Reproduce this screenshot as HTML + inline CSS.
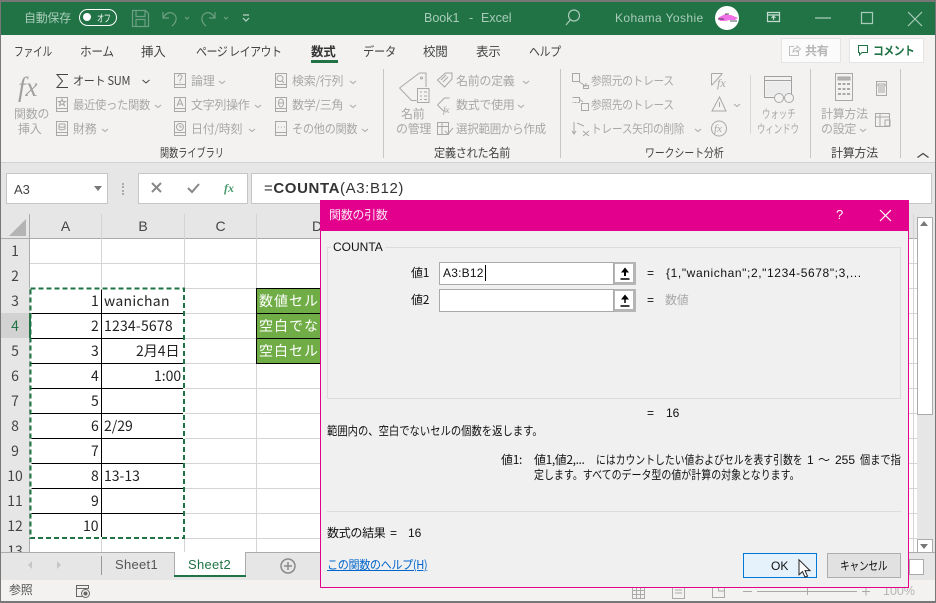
<!DOCTYPE html>
<html lang="ja"><head><meta charset="utf-8"><style>
html,body{margin:0;padding:0}
body{width:936px;height:603px;overflow:hidden;position:relative;background:#f3f2f1;font-family:"Liberation Sans","Noto Sans CJK JP",sans-serif;font-size:12px;color:#333}
.t{position:absolute;white-space:nowrap;line-height:14px;height:14px;transform-origin:0 0}
.b{position:absolute}
.g{color:#a8a8a8}
.j{font-family:"Noto Sans CJK JP",sans-serif;letter-spacing:-.3px}
.w{color:#a9ccba}
.tab{color:#444;top:44px;font-size:12.5px}
.c{font-size:14px;color:#222;line-height:16px;height:16px;font-family:"Noto Sans CJK JP","Liberation Sans",sans-serif}
.rh{position:absolute;left:1px;width:28px;text-align:center;font-size:14px;line-height:25px;height:25px;color:#444;font-family:"Noto Sans CJK JP",sans-serif}
.ch{position:absolute;top:214px;height:24px;line-height:24px;text-align:center;font-size:14px;color:#444}
.h{position:absolute;background:#d4d4d4;height:1px;left:30px;width:887px}
.v{position:absolute;background:#d4d4d4;width:1px;top:214px;height:338px}
.blk{position:absolute;background:#000}
.d{color:#111;font-size:12px}
svg{position:absolute;overflow:visible}
</style></head><body>
<!-- chrome -->
<div class="b" style="left:0;top:0;width:936px;height:2px;background:#777"></div>
<div class="b" style="left:0;top:2px;width:936px;height:33px;background:#217346"></div>
<div class="b" style="left:0;top:0;width:1px;height:603px;background:#777;z-index:9"></div>
<div class="b" style="right:0;top:0;width:1px;height:603px;background:#777;z-index:9"></div>
<div class="b" style="left:0;top:601px;width:936px;height:2px;background:#777;z-index:9"></div>

<div class="t j w" style="left:24px;top:11px">自動保存</div>
<div class="b" style="left:79px;top:9px;width:36px;height:15px;border:1px solid #fff;border-radius:9px"></div>
<div class="b" style="left:83px;top:13px;width:8px;height:8px;background:#fff;border-radius:50%"></div>
<div class="t j" style="left:97px;top:11px;color:#fff;font-size:10px;transform:scaleX(.7)">オフ</div>
<svg style="left:0;top:0" width="936" height="36" fill="none" stroke="#6d9f82" stroke-width="1.2">
<path d="M132.500 10.500h13l3 3v13h-16zM136 10.500v6h9v-6M136 26.500v-7h9v7"/>
<path d="M163 12v6h6M163 18c3-5 6-6 9-5 5 2 6 8 0 13"/>
<path d="M185 17l2 2 2-2M224 17l2 2 2-2"/>
<path d="M215 12v6h-6M215 18c-3-5-6-6-9-5-5 2-6 8 0 13"/>
<path d="M243 15h6M243 18l3 3 3-3" stroke="#b9d3c5"/>
<path d="M566 25l5-6" stroke="#a9ccba"/><circle cx="574" cy="15.500" r="5.500" stroke="#a9ccba"/>
<path d="M767.500 12.500h12v9h-12zM767.500 15h12M773.500 20v-3.500M771.500 18l2-2 2 2" stroke="#c3dccf"/>
<path d="M815 18h16M861.500 12.500h11v11h-11zM908 12l14 14M922 12l-14 14" stroke="#a9ccba"/>
</svg>
<div class="t w" style="left:424px;top:11px;font-size:12.5px">Book1</div>
<div class="t w" style="left:469px;top:11px;font-size:12.5px">-</div>
<div class="t w" style="left:481px;top:11px;font-size:12.5px">Excel</div>
<div class="t w" style="left:615px;top:11px;font-size:12px;letter-spacing:.4px">Kohama Yoshie</div>
<div class="b" style="left:715px;top:6px;width:24px;height:24px;border-radius:50%;background:#fff"></div>
<svg style="left:716px;top:12px" width="24" height="12"><path d="M2 6c3-2 5-3 8-4l2 1 3 0 7 3-3 2-5 0-5 1-5 0z" fill="#f070e8"/><path d="M2 7h6M14 9h7M9 2h4" stroke="#222" stroke-width=".8"/></svg>

<!-- tabs -->
<div class="t j tab" style="left:14px;transform:scaleX(.78)">ファイル</div>
<div class="t j tab" style="left:80px;transform:scaleX(.93)">ホーム</div>
<div class="t j tab" style="left:141px">挿入</div>
<div class="t j tab" style="left:196px;letter-spacing:-.6px;transform:scaleX(.88)">ページ レイアウト</div>
<div class="t j tab" style="left:311px;font-weight:700;color:#333">数式</div>
<div class="t j tab" style="left:363px;transform:scaleX(.9)">データ</div>
<div class="t j tab" style="left:423px">校閲</div>
<div class="t j tab" style="left:476px">表示</div>
<div class="t j tab" style="left:529px;transform:scaleX(.87)">ヘルプ</div>
<div class="b" style="left:311px;top:60px;width:27px;height:3px;background:#217346"></div>
<div class="b" style="left:781px;top:38px;width:58px;height:23px;background:#fbfbfb;border:1px solid #e4e4e4"></div>
<div class="t j g" style="left:805px;top:44px;font-weight:700;color:#b5b5b5">共有</div>
<svg style="left:789px;top:45px" width="12" height="11" fill="none" stroke="#c0c0c0"><path d="M5 1.500H.5v9h9V6M4 7c0-3 2-4 4-4V1l3.500 3L8 7V5.500C6 5.500 5 6 4 7z"/></svg>
<div class="b" style="left:849px;top:38px;width:73px;height:23px;background:#fff;border:1px solid #e4e4e4"></div>
<svg style="left:858px;top:45px" width="11" height="11" fill="none" stroke="#217346"><path d="M.5.500h9v7H4L1.500 10V7.500h-1z"/></svg>
<div class="t j" style="left:873px;top:44px;font-weight:700;color:#217346;letter-spacing:-.5px;transform:scaleX(.9)">コメント</div>

<!-- ribbon -->
<div class="t g" style="left:18px;top:72px;font:italic 27px/30px 'Liberation Serif',serif;height:30px;color:#a0a0a0">fx</div>
<div class="t j g" style="left:14px;top:107px">関数の</div><div class="t j g" style="left:18px;top:122px">挿入</div>
<div class="t j" style="left:73px;top:74px;color:#444;transform:scaleX(.92)">オート SUM</div>
<div class="t j g" style="left:73px;top:98px;transform:scaleX(.94)">最近使った関数</div>
<div class="t j g" style="left:73px;top:122px">財務</div>
<div class="t j g" style="left:191px;top:74px">論理</div>
<div class="t j g" style="left:191px;top:98px">文字列操作</div>
<div class="t j g" style="left:191px;top:122px">日付/時刻</div>
<div class="t j g" style="left:292px;top:74px">検索/行列</div>
<div class="t j g" style="left:292px;top:98px">数学/三角</div>
<div class="t j g" style="left:292px;top:122px;transform:scaleX(.93)">その他の関数</div>
<div class="t j" style="left:160px;top:146px;color:#444;letter-spacing:0;transform:scaleX(.76)">関数ライブラリ</div>
<div class="t j g" style="left:401px;top:107px">名前</div><div class="t j g" style="left:396px;top:122px">の管理</div>
<div class="t j g" style="left:456px;top:74px">名前の定義</div>
<div class="t j g" style="left:456px;top:98px">数式で使用</div>
<div class="t j g" style="left:456px;top:122px;transform:scaleX(.96)">選択範囲から作成</div>
<div class="t j" style="left:434px;top:146px;color:#444;transform:scaleX(.93)">定義された名前</div>
<div class="t j g" style="left:591px;top:74px;transform:scaleX(.89)">参照元のトレース</div>
<div class="t j g" style="left:591px;top:98px;transform:scaleX(.89)">参照先のトレース</div>
<div class="t j g" style="left:591px;top:122px;transform:scaleX(.89)">トレース矢印の削除</div>
<div class="t j" style="left:645px;top:146px;color:#444;letter-spacing:0;transform:scaleX(.82)">ワークシート分析</div>
<div class="t j g" style="left:762px;top:107px;letter-spacing:0;transform:scaleX(.7)">ウォッチ</div><div class="t j g" style="left:757px;top:122px;letter-spacing:0;transform:scaleX(.7)">ウィンドウ</div>
<div class="t j g" style="left:821px;top:107px">計算方法</div><div class="t j g" style="left:821px;top:122px">の設定</div>
<div class="t j" style="left:831px;top:146px;color:#444">計算方法</div>
<div class="t" style="left:717px;top:76px;font:italic 12px/14px 'Liberation Serif',serif;color:#a8a8a8">fx</div>
<div class="t" style="left:714px;top:122px;font:italic 11px/14px 'Liberation Serif',serif;color:#a8a8a8">fx</div>
<div class="t" style="left:443px;top:104px;font:italic 9px/12px 'Liberation Serif',serif;color:#a8a8a8">fx</div>
<svg style="left:0;top:0" width="936" height="165" fill="none" stroke="#a8a8a8" stroke-width="1">
<path d="M68 74.500H57l5.500 6.500-5.500 6.500h11" stroke="#444"/>
<!-- chevrons -->
<path d="M142.500 80l3.500 3 3.500-3" stroke="#444"/>
<path d="M155 105l3 2.500 3-2.500M102 129l3 2.500 3-2.500M219 81l3 2.500 3-2.500M255 105l3 2.500 3-2.500M249 129l3 2.500 3-2.500M350 81l3 2.500 3-2.500M350 105l3 2.500 3-2.500M362 129l3 2.500 3-2.500M523 81l3 2.500 3-2.500M518 105l3 2.500 3-2.500M695 129l3 2.500 3-2.500M734 104l3 2.500 3-2.500M860 129l3 2.500 3-2.500"/>
<!-- book icons -->
<path d="M56.500 97.500h11v14h-11zM56.500 108.500h11M56.500 121.500h11v14h-11zM56.500 132.500h11M174.500 73.500h11v14h-11zM174.500 84.500h11M174.500 97.500h11v14h-11zM174.500 108.500h11M174.500 121.500h11v14h-11zM174.500 132.500h11M275.500 73.500h11v14h-11zM275.500 84.500h11M275.500 97.500h11v14h-11zM275.500 108.500h11M275.500 121.500h11v14h-11zM275.500 132.500h11"/>
<path d="M62 99l1 2.500h2.500l-2 1.500 1 2.500-2.500-1.500-2.500 1.500 1-2.500-2-1.500H61zM59 124h6M59 124v5c1 1 5 1 6 0v-5M59 126.500c1 1 5 1 6 0M178 77c0-3 4-3 4 0 0 2-2 2-2 4M180 82v1M177 106l3-7 3 7M178 104h4"/>
<circle cx="180" cy="127" r="3.500"/><path d="M180 125v2h2M282 81l2 2"/><circle cx="280" cy="78.500" r="3"/><ellipse cx="281" cy="103" rx="2.500" ry="4"/><path d="M278.500 103h5M278 127h1M281 127h1M284 127h1"/>
<!-- name icons -->
<path d="M399.500 88l20-15h6.500v14M399.500 88l12 12.500h5"/><circle cx="421.500" cy="78" r="1"/>
<path d="M417.500 88.500h11.500v14h-11.500zM420 92h2M424 92h3M420 96h2M424 96h3M420 99.500h2M424 99.500h3"/>
<path d="M437.500 80l8-7h6.500v6l-7.500 8zM441 80l5-5M443 82l5-5M437.500 105l7-7h5M437.500 105l6 6h3M437.500 122.500h11v12h-11zM437.500 126.500h11M442 122.500v12M445 131l3 3 5-6"/>
<!-- trace icons -->
<path d="M572.500 73.500h7v8h-7zM579.500 82l6 4M586 83v3h-3M583.500 85.500h5v3h-5zM581.500 103.500h7v7h-7zM579 99l4 3M572.500 97.500h7v5M574 122v11M572 131l2 3 2-3M577 123l7 3M583 131l6 5M589 131l-6 5"/>
<path d="M572.500 97.500h7v5h-7" stroke-dasharray="2 1"/>
<path d="M711.500 73.500h11M711.500 73.500v12M722 74l-10 11M719.500 97l-7.500 14h14zM719.500 102v5"/><circle cx="719" cy="128.500" r="7.500"/>
<!-- watch -->
<path d="M764.500 76.500h27v21h-27zM764.500 80.500h27" stroke="#a0a0a0"/>
<path d="M766 82h24v14h-24z" fill="#ececec" stroke="none"/>
<circle cx="779" cy="98" r="4.500" fill="#f3f2f1"/><circle cx="789" cy="98" r="4.500" fill="#f3f2f1"/>
<!-- calc -->
<path d="M835.500 73.500h17v27h-17z"/><path d="M838 77h12v3h-12z" fill="#b5b5b5"/>
<path d="M838 84h3M842.500 84h3M847 84h3M838 89h3M842.500 89h3M847 89h3M838 94h3M842.500 94h3M847 94h3" stroke-width="2"/>
<path d="M876.500 81.500h10v14h-10zM878 84h7v2h-7zM878 88h7M878 90h7M878 92h7M875.500 113.500h14v13h-14zM875.500 117h14M880 113.500v13M885 120h5v6h-5z"/>
<path d="M917.500 157.500l5.500-4 5.500 4" stroke="#444" stroke-width="1.200"/>
<path d="M383.500 69v89M560.500 69v89M810.500 69v89M900.500 69v89" stroke="#c6c6c6"/><path d="M750.500 75v59" stroke="#d8d8d8"/>
</svg>
<div class="b" style="left:1px;top:162px;width:934px;height:1px;background:#d2d2d2"></div>

<!-- formula bar -->
<div class="b" style="left:1px;top:163px;width:934px;height:51px;background:#e6e6e6"></div>
<div class="b" style="left:6px;top:173px;width:100px;height:29px;background:#fff;border:1px solid #c6c6c6"></div>
<div class="t" style="left:14px;top:183px;font-size:13px;color:#444">A3</div>
<div class="b" style="left:94px;top:186px;border:4px solid transparent;border-top:5px solid #777"></div>
<div class="b" style="left:122px;top:183px;width:2px;height:12px;border-left:2px dotted #aaa"></div>
<div class="b" style="left:138px;top:173px;width:108px;height:29px;background:#fff;border:1px solid #c6c6c6"></div>
<div class="b" style="left:251px;top:173px;width:679px;height:29px;background:#fff;border:1px solid #c6c6c6"></div>
<svg style="left:0;top:0" width="260" height="210" fill="none" stroke-width="2"><path d="M152 183l9 9M161 183l-9 9" stroke="#888"/><path d="M188 188l4 4 7-8" stroke="#888"/></svg>
<div class="t" style="left:224px;top:181px;font:italic 700 12px/14px 'Liberation Serif',serif;color:#4b9a6d">fx</div>
<div class="t" style="left:264px;top:181px;font-size:15px;line-height:15px;color:#333;letter-spacing:.6px">=<b>COUNTA</b>(A3:B12)</div>

<!-- grid -->
<div class="b" style="left:1px;top:214px;width:934px;height:338px;background:#fff"></div>
<div class="b" style="left:1px;top:214px;width:934px;height:24px;background:#e6e6e6"></div>
<div class="b" style="left:1px;top:214px;width:28px;height:338px;background:#e6e6e6"></div>
<div class="b" style="left:9px;top:219px;border-style:solid;border-width:0 0 17px 17px;border-color:transparent transparent #b4b4b4 transparent"></div>
<div class="b" style="left:1px;top:238px;width:934px;height:1px;background:#ababab"></div>
<div class="b" style="left:29px;top:214px;width:1px;height:338px;background:#ababab"></div>
<div class="ch" style="left:30px;width:71px">A</div><div class="ch" style="left:102px;width:82px">B</div><div class="ch" style="left:185px;width:71px">C</div><div class="ch" style="left:257px;width:120px">D</div>
<div class="h" style="top:263px"></div><div class="h" style="top:288px"></div><div class="h" style="top:313px"></div><div class="h" style="top:338px"></div><div class="h" style="top:363px"></div><div class="h" style="top:388px"></div><div class="h" style="top:413px"></div><div class="h" style="top:438px"></div><div class="h" style="top:463px"></div><div class="h" style="top:488px"></div><div class="h" style="top:513px"></div><div class="h" style="top:538px"></div>
<div class="v" style="left:101px"></div><div class="v" style="left:184px"></div><div class="v" style="left:256px"></div><div class="v" style="left:913px"></div>
<div class="b" style="left:1px;top:313px;width:28px;height:25px;background:#d2d2d2"></div>
<div class="rh" style="top:239px">1</div><div class="rh" style="top:264px">2</div><div class="rh" style="top:289px">3</div><div class="rh" style="top:314px;color:#217346">4</div><div class="rh" style="top:339px">5</div><div class="rh" style="top:364px">6</div><div class="rh" style="top:389px">7</div><div class="rh" style="top:414px">8</div><div class="rh" style="top:439px">9</div><div class="rh" style="top:464px">10</div><div class="rh" style="top:489px">11</div><div class="rh" style="top:514px">12</div><div class="rh" style="top:539px;height:13px;overflow:hidden">13</div>
<!-- black borders -->
<div class="blk" style="left:30px;top:313px;width:154px;height:1px"></div><div class="blk" style="left:30px;top:338px;width:154px;height:1px"></div><div class="blk" style="left:30px;top:363px;width:154px;height:1px"></div><div class="blk" style="left:30px;top:388px;width:154px;height:1px"></div><div class="blk" style="left:30px;top:413px;width:154px;height:1px"></div><div class="blk" style="left:30px;top:438px;width:154px;height:1px"></div><div class="blk" style="left:30px;top:463px;width:154px;height:1px"></div><div class="blk" style="left:30px;top:488px;width:154px;height:1px"></div><div class="blk" style="left:30px;top:513px;width:154px;height:1px"></div>
<div class="blk" style="left:101px;top:288px;width:1px;height:250px"></div>
<svg style="left:0;top:0" width="190" height="545" fill="none"><rect x="30.500" y="288.500" width="153.500" height="249.500" stroke="#fff" stroke-width="2"/><rect x="30.500" y="288.500" width="153.500" height="249.500" stroke="#217346" stroke-width="2" stroke-dasharray="5 3"/></svg>
<div class="b" style="left:29px;top:313px;width:2px;height:25px;background:#217346"></div>
<!-- cell values -->
<div class="t c" style="left:91px;top:293px">1</div>
<div class="t c" style="left:91px;top:318px">2</div>
<div class="t c" style="left:91px;top:343px">3</div>
<div class="t c" style="left:91px;top:368px">4</div>
<div class="t c" style="left:91px;top:393px">5</div>
<div class="t c" style="left:91px;top:418px">6</div>
<div class="t c" style="left:91px;top:443px">7</div>
<div class="t c" style="left:91px;top:468px">8</div>
<div class="t c" style="left:91px;top:493px">9</div>
<div class="t c" style="left:83px;top:518px">10</div>
<div class="t c" style="left:104px;top:293px;letter-spacing:.3px">wanichan</div>
<div class="t c" style="left:104px;top:318px;letter-spacing:.2px">1234-5678</div>
<div class="t c" style="left:136px;top:343px">2月4日</div>
<div class="t c" style="left:154px;top:368px">1:00</div>
<div class="t c" style="left:104px;top:418px">2/29</div>
<div class="t c" style="left:104px;top:468px">13-13</div>
<div class="b" style="left:257px;top:289px;width:64px;height:74px;background:#70ad47"></div>
<div class="blk" style="left:256px;top:288px;width:65px;height:1px"></div><div class="blk" style="left:256px;top:313px;width:65px;height:1px"></div><div class="blk" style="left:256px;top:338px;width:65px;height:1px"></div><div class="blk" style="left:256px;top:363px;width:65px;height:1px"></div><div class="blk" style="left:256px;top:288px;width:1px;height:76px"></div>
<div class="t c" style="left:259px;top:293px;color:#fff;width:61px;overflow:hidden;letter-spacing:1px">数値セル</div>
<div class="t c" style="left:259px;top:318px;color:#fff;width:61px;overflow:hidden;letter-spacing:1px">空白でな</div>
<div class="t c" style="left:259px;top:343px;color:#fff;width:61px;overflow:hidden;letter-spacing:1px">空白セル</div>

<!-- scrollbar -->
<div class="b" style="left:917px;top:214px;width:18px;height:338px;background:#e6e6e6"></div>
<div class="b" style="left:917px;top:217px;width:14px;height:13px;background:#fff;border:1px solid #ababab"></div>
<div class="b" style="left:920px;top:221px;border:4px solid transparent;border-top:0;border-bottom:5px solid #777"></div>
<div class="b" style="left:917px;top:231px;width:14px;height:183px;background:#fff;border:1px solid #ababab;border-top:0"></div>
<div class="b" style="left:917px;top:539px;width:14px;height:12px;background:#fff;border:1px solid #ababab"></div>
<div class="b" style="left:920px;top:544px;border:4px solid transparent;border-bottom:0;border-top:5px solid #777"></div>

<!-- sheet tabs -->
<div class="b" style="left:1px;top:552px;width:934px;height:28px;background:#e6e6e6;border-top:1px solid #ababab;box-sizing:border-box"></div>
<div class="b" style="left:28px;top:561px;border:4px solid transparent;border-left:0;border-right:4px solid #c6c6c6"></div>
<div class="b" style="left:57px;top:561px;border:4px solid transparent;border-right:0;border-left:4px solid #c6c6c6"></div>
<div class="b" style="left:101px;top:556px;width:1px;height:19px;background:#999"></div>
<div class="t" style="left:115px;top:558px;font-size:13px;color:#555;letter-spacing:.3px">Sheet1</div>
<div class="b" style="left:174px;top:552px;width:72px;height:25px;background:#fff;border-left:1px solid #ababab;border-right:1px solid #ababab;box-sizing:border-box"></div>
<div class="b" style="left:174px;top:575px;width:72px;height:2px;background:#217346"></div>
<div class="t" style="left:188px;top:558px;font-size:13px;color:#217346;letter-spacing:.3px">Sheet2</div>
<svg style="left:278px;top:558px" width="20" height="16" fill="none" stroke="#8a8a8a" stroke-width="1.500"><circle cx="10" cy="8" r="7"/><path d="M6 8h8M10 4v8"/></svg>
<div class="b" style="left:909px;top:559px;width:13px;height:14px;background:#fff;border:1px solid #ababab"></div>

<!-- status -->
<div class="t j" style="left:9px;top:583px;color:#555">参照</div>
<svg style="left:76px;top:584px" width="15" height="15" fill="none" stroke="#666"><path d="M.5 1.500h12v3h-12zM.5 4.500v8h6"/><circle cx="9.500" cy="9.500" r="4"/><circle cx="9.500" cy="9.500" r="1.500" fill="#666"/></svg>
<svg style="left:0;top:0" width="936" height="603" fill="none" stroke="#aaa"><path d="M632.500 586.500h12v12h-12zM632.500 590.500h12M632.500 594.500h12M636.500 586v12M640.500 586v12M672.500 586.500h12v12h-12zM675 590h7M675 593h7M712.500 586.500h12v11h-12zM718.500 586v5h6M743 591.500h9M757 591.500h100M807.500 588v7M862 591.500h8M866 587.500v8"/></svg>
<div class="t g" style="left:883px;top:584px;color:#b5b5b5;font-size:12.5px">100%</div>

<!-- dialog -->
<div class="b" style="left:320px;top:200px;width:589px;height:388px;background:#f0f0f0;border:1px solid #e3008c;box-sizing:border-box"></div>
<div class="b" style="left:320px;top:200px;width:589px;height:31px;background:#e3008c"></div>
<div class="t j" style="left:329px;top:208px;color:#fff;opacity:.9">関数の引数</div>
<div class="t" style="left:836px;top:208px;color:#fff;font-size:13px">?</div>
<svg style="left:880px;top:210px" width="11" height="11" stroke="#fff" stroke-width="1.200"><path d="M0 0l11 11M11 0L0 11"/></svg>
<div class="b" style="left:327px;top:247px;width:574px;height:152px;border:1px solid #dcdcdc;box-sizing:border-box"></div>
<div class="t d" style="left:331px;top:240px;background:#f0f0f0;padding:0 2px">COUNTA</div>
<div class="t j d" style="left:411px;top:266px">値1</div>
<div class="t j d" style="left:411px;top:293px">値2</div>
<div class="b" style="left:439px;top:262px;width:175px;height:23px;background:#fff;border:1px solid #aaa;box-sizing:border-box"></div>
<div class="b" style="left:439px;top:289px;width:175px;height:23px;background:#fff;border:1px solid #aaa;box-sizing:border-box"></div>
<div class="b" style="left:614px;top:262px;width:22px;height:23px;background:#fff;border:3px solid #b5b5b5;border-width:2px 3px 3px 1px;box-sizing:border-box"></div>
<div class="b" style="left:614px;top:289px;width:22px;height:23px;background:#fff;border:3px solid #b5b5b5;border-width:2px 3px 3px 1px;box-sizing:border-box"></div>
<svg style="left:619px;top:267px" width="12" height="42"><path d="M6 9V2" stroke="#000" stroke-width="2"/><path d="M2 5.500L6 .5l4 5zM2 32.500L6 27.500l4 5z" fill="#000"/><path d="M6 36V29M1.500 12h9M1.500 39h9" stroke="#000" stroke-width="1.500"/></svg>
<div class="t d" style="left:443px;top:266px;letter-spacing:.2px">A3:B12</div>
<div class="b" style="left:485px;top:265px;width:1px;height:16px;background:#000"></div>
<div class="t d" style="left:647px;top:266px">=</div>
<div class="t d" style="left:647px;top:293px">=</div>
<div class="t d" style="left:666px;top:266px;letter-spacing:.6px">{1,"wanichan";2,"1234-5678";3,...</div>
<div class="t j" style="left:665px;top:293px;color:#a8a8a8">数値</div>
<div class="t d" style="left:647px;top:406px">=</div>
<div class="t d" style="left:666px;top:406px">16</div>
<div class="t j d" style="left:327px;top:424px;letter-spacing:0;transform:scaleX(.86)">範囲内の、空白でないセルの個数を返します。</div>
<div class="t j d" style="left:501px;top:453px">値1:</div>
<div class="t j d" style="left:534px;top:453px;letter-spacing:-.4px">値1,値2,...</div>
<div class="t j d" style="left:596px;top:453px;letter-spacing:0;transform:scaleX(.82)">にはカウントしたい値およびセルを表す引数を</div>
<div class="t d" style="left:807px;top:453px">1</div>
<div class="t j d" style="left:818px;top:453px">～</div>
<div class="t d" style="left:835px;top:453px">255</div>
<div class="t j d" style="left:860px;top:453px;letter-spacing:0;transform:scaleX(.85)">個まで指</div>
<div class="t j d" style="left:534px;top:468px;letter-spacing:0;transform:scaleX(.83)">定します。すべてのデータ型の値が計算の対象となります。</div>
<div class="b" style="left:327px;top:511px;width:574px;height:1px;background:#dcdcdc"></div>
<div class="t j d" style="left:327px;top:526px">数式の結果</div>
<div class="t d" style="left:390px;top:526px">=</div>
<div class="t d" style="left:408px;top:526px">16</div>
<div class="t j" style="left:327px;top:558px;color:#0066cc;text-decoration:underline;letter-spacing:-.4px;transform:scaleX(.925)">この関数のヘルプ(H)</div>
<div class="b" style="left:743px;top:553px;width:74px;height:25px;background:#e5f1fb;border:1px solid #0078d7;box-sizing:border-box"></div>
<div class="t d" style="left:771px;top:559px">OK</div>
<div class="b" style="left:827px;top:553px;width:74px;height:25px;background:#e1e1e1;border:1px solid #adadad;box-sizing:border-box"></div>
<div class="t j d" style="left:840px;top:559px;letter-spacing:-.5px;transform:scaleX(.82)">キャンセル</div>
<svg style="left:798px;top:559px" width="14" height="20"><path d="M1 .8v15l3.500-3.200 2.500 5.500 2.500-1-2.500-5.500h5z" fill="#fff" stroke="#222"/></svg>
</body></html>
